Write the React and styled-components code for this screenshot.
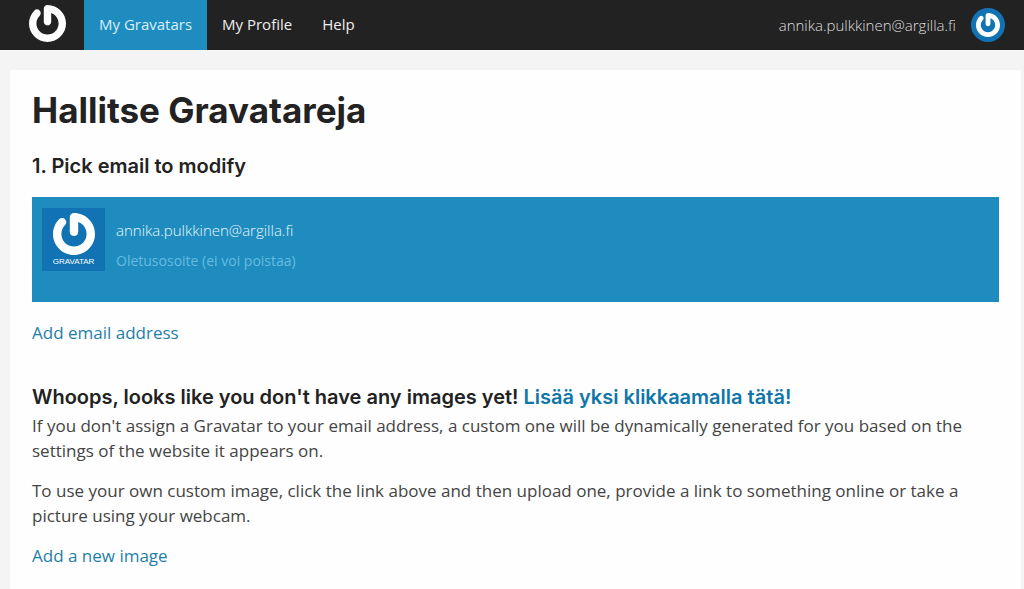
import styled, { createGlobalStyle } from "styled-components";

const email = "annika.pulkkinen@argilla.fi";

export default function App() {
  return (
    <>
      <GlobalStyle />
      <Header>
        <HomeLink href='#' aria-label='Gravatar'>
          <GravatarMark size={37} />
        </HomeLink>
        <Nav>
          <NavLink href='#gravatars' $active>
            My Gravatars
          </NavLink>
          <NavLink href='#profile'>My Profile</NavLink>
          <NavLink href='#help'>Help</NavLink>
        </Nav>
        <Account href='#account'>
          {email}
          <Avatar>
            <GravatarMark size={24} />
          </Avatar>
        </Account>
      </Header>

      <Card>
        <Title>Hallitse Gravatareja</Title>
        <Step>1. Pick email to modify</Step>

        <EmailRow>
          <Tile>
            <GravatarMark size={42} />
            <TileName>GRAVATAR</TileName>
          </Tile>
          <div>
            <Address>{email}</Address>
            <Note>Oletusosoite (ei voi poistaa)</Note>
          </div>
        </EmailRow>

        <TextLink href='#add-email'>Add email address</TextLink>

        <Notice>
          Whoops, looks like you don't have any images yet! <a href='#add'>Lisää yksi klikkaamalla tätä!</a>
        </Notice>
        <Text>
          If you don't assign a Gravatar to your email address, a custom one will be dynamically generated for you based
          on the settings of the website it appears on.
        </Text>
        <Text>
          To use your own custom image, click the link above and then upload one, provide a link to something online or
          take a picture using your webcam.
        </Text>
        <TextLink href='#add-image'>Add a new image</TextLink>
      </Card>
    </>
  );
}

function GravatarMark({ size }) {
  return (
    <svg width={size} height={size} viewBox='0 0 24 24' fill='currentColor' aria-hidden='true'>
      <path d='M12 0c-1.326 0-2.4 1.074-2.4 2.4v8.4c0 1.324 1.074 2.398 2.4 2.398s2.4-1.074 2.4-2.398V5.21c2.795.99 4.799 3.654 4.799 6.789 0 3.975-3.225 7.199-7.199 7.199S4.801 15.975 4.801 12c0-1.989.805-3.789 2.108-5.091.938-.938.938-2.458 0-3.396s-2.458-.938-3.396 0C1.344 5.686 0 8.686 0 12c0 6.627 5.373 12 12 12s12-5.373 12-12S18.627 0 12 0' />
    </svg>
  );
}

const GlobalStyle = createGlobalStyle`
  * {
    box-sizing: border-box;
  }

  body {
    margin: 0;
    background: #f4f4f4;
    color: #444;
    font-family: "Open Sans", sans-serif;
    font-size: 17px;
    line-height: 25px;
  }

  a {
    color: #1e7ea8;
    text-decoration: none;
  }

  svg {
    display: block;
  }
`;

const Header = styled.header`
  display: flex;
  height: 50px;
  background: #222;
  font-size: 15px;
`;

const HomeLink = styled.a`
  display: flex;
  align-items: center;
  padding: 0 18px 3px 29px;
  color: #fff;
`;

const Nav = styled.nav`
  display: flex;
`;

const NavLink = styled.a`
  display: flex;
  align-items: center;
  padding: 0 15px 2px;
  background: ${(props) => (props.$active ? "#1e8cbe" : "transparent")};
  color: ${(props) => (props.$active ? "#d9effa" : "#eee")};
`;

const Account = styled.a`
  display: flex;
  align-items: center;
  gap: 15px;
  margin-left: auto;
  padding-right: 19px;
  color: #ddd;
  font-weight: 300;
`;

const Avatar = styled.span`
  display: flex;
  align-items: center;
  justify-content: center;
  width: 34px;
  height: 34px;
  border-radius: 50%;
  background: #1273b4;
  color: #fff;
`;

const Card = styled.main`
  margin: 20px 3px 0 10px;
  padding: 18px 22px 21px;
  background: #fefefe;
`;

const Title = styled.h1`
  margin: 0 0 22px;
  color: #222;
  font-family: Inter, sans-serif;
  font-size: 35px;
  font-weight: 700;
  line-height: 44px;
`;

const Step = styled.h2`
  margin: 0 0 19px;
  color: #222;
  font-family: Inter, sans-serif;
  font-size: 20px;
  font-weight: 600;
  line-height: 24px;
`;

const EmailRow = styled.section`
  display: flex;
  gap: 11px;
  min-height: 105px;
  margin-bottom: 18px;
  padding: 11px 10px;
  background: #1e8cbe;
`;

const Tile = styled.div`
  display: flex;
  flex-direction: column;
  align-items: center;
  width: 63px;
  height: 63px;
  padding-top: 5px;
  background: #1273b4;
  color: #fff;
`;

const TileName = styled.span`
  font-family: "Liberation Sans", sans-serif;
  font-size: 8px;
  line-height: 14px;
`;

const Address = styled.p`
  margin: 12px 0 11px;
  color: #e8f6fd;
  font-size: 15px;
  font-weight: 300;
  line-height: 20px;
`;

const Note = styled.p`
  margin: 0;
  color: #67bbe0;
  font-size: 14px;
  line-height: 20px;
`;

const TextLink = styled.a`
  display: table;
`;

const Notice = styled.h2`
  margin: 40px 0 3px;
  color: #222;
  font-family: Inter, sans-serif;
  font-size: 20px;
  font-weight: 600;
  line-height: 25px;

  a {
    color: #0f76a8;
  }
`;

const Text = styled.p`
  margin: 0 0 15px;
`;
